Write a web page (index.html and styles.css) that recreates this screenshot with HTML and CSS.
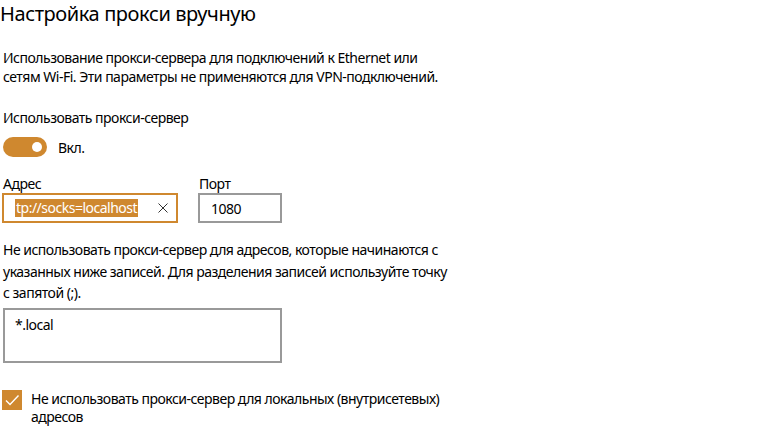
FILE: index.html
```html
<!DOCTYPE html>
<html lang="ru">
<head>
<meta charset="utf-8">
<link rel="stylesheet" href="styles.css">
</head>
<body>
<main class="page">
  <h1 class="title">Настройка прокси вручную</h1>
  <p class="desc">Использование прокси-сервера для подключений к Ethernet или<br>сетям Wi-Fi. Эти параметры не применяются для VPN-подключений.</p>
  <div class="label">Использовать прокси-сервер</div>
  <div class="toggle-row">
    <span class="toggle"><span class="knob"></span></span>
    <span class="toggle-text">Вкл.</span>
  </div>
  <div class="fields">
    <div class="field">
      <div class="field-label">Адрес</div>
      <div class="input addr">
        <span class="sel">tp://socks=localhost</span>
        <svg class="clear" width="10" height="10" viewBox="0 0 10 10"><path d="M0.5 0.5 L9.5 9.5 M9.5 0.5 L0.5 9.5" stroke="#333" stroke-width="1" fill="none"/></svg>
      </div>
    </div>
    <div class="field">
      <div class="field-label">Порт</div>
      <div class="input port">1080</div>
    </div>
  </div>
  <p class="desc2">Не использовать прокси-сервер для адресов, которые начинаются с<br>указанных ниже записей. Для разделения записей используйте точку<br>с запятой (;).</p>
  <div class="textarea">*.local</div>
  <div class="check-row">
    <span class="checkbox"><svg width="20" height="20" viewBox="0 0 20 20"><path d="M4 10.5 L8 14.5 L16.5 5.5" stroke="#fff" stroke-width="1.4" fill="none"/></svg></span>
    <span class="check-text">Не использовать прокси-сервер для локальных (внутрисетевых)<br>адресов</span>
  </div>
</main>
</body>
</html>
```
FILE: styles.css
```css
html, body {
  margin: 0;
  padding: 0;
  background: #fff;
}
body {
  font-family: "Segoe UI", "Noto Sans", "Open Sans", sans-serif;
  font-size: 14px;
  letter-spacing: -0.5px;
  color: #000;
  width: 783px;
  height: 427px;
  overflow: hidden;
}
.page {
  padding-left: 3px;
}
.title {
  margin: 0 0 0 -3px;
  font-size: 20px;
  font-weight: 400;
  letter-spacing: -0.4px;
  line-height: 28px;
  height: 28px;
}
.desc {
  margin: 20px 0 0;
  line-height: 19px;
  white-space: nowrap;
}
.label {
  margin-top: 22px;
  line-height: 19px;
}
.toggle-row {
  margin-top: 10px;
  display: flex;
  align-items: center;
  height: 20px;
}
.toggle {
  width: 44px;
  height: 20px;
  border-radius: 10px;
  background: #cf882f;
  display: flex;
  align-items: center;
  justify-content: flex-end;
  padding-right: 5px;
  box-sizing: border-box;
}
.knob {
  width: 10px;
  height: 10px;
  border-radius: 50%;
  background: #fff;
}
.toggle-text {
  margin-left: 11px;
}
.fields {
  margin-top: 18px;
  display: flex;
  gap: 20px;
  margin-left: -1px;
}
.field-label {
  line-height: 18px;
  padding-left: 1px;
}
.input {
  height: 30px;
  box-sizing: border-box;
  border: 2px solid #999;
  display: flex;
  align-items: center;
}
.addr {
  width: 176px;
  border-color: #cf882f;
  padding-left: 11px;
  padding-right: 8px;
  justify-content: space-between;
}
.sel {
  background: #cf882f;
  color: #fff;
  line-height: 18px;
  padding: 0 1px;
}
.port {
  width: 84px;
  padding-left: 11px;
}
.desc2 {
  margin: 16px 0 0;
  line-height: 21.5px;
  white-space: nowrap;
}
.textarea {
  margin-top: 4px;
  width: 279px;
  height: 55px;
  box-sizing: border-box;
  border: 2px solid #999;
  padding: 5px 10px;
  line-height: 19px;
}
.check-row {
  margin-top: 27px;
  margin-left: -1px;
  display: flex;
  align-items: flex-start;
}
.checkbox {
  width: 20px;
  height: 20px;
  background: #cf882f;
  flex: none;
}
.checkbox svg {
  display: block;
}
.check-text {
  margin-left: 9px;
  line-height: 18.5px;
  white-space: nowrap;
}
```
